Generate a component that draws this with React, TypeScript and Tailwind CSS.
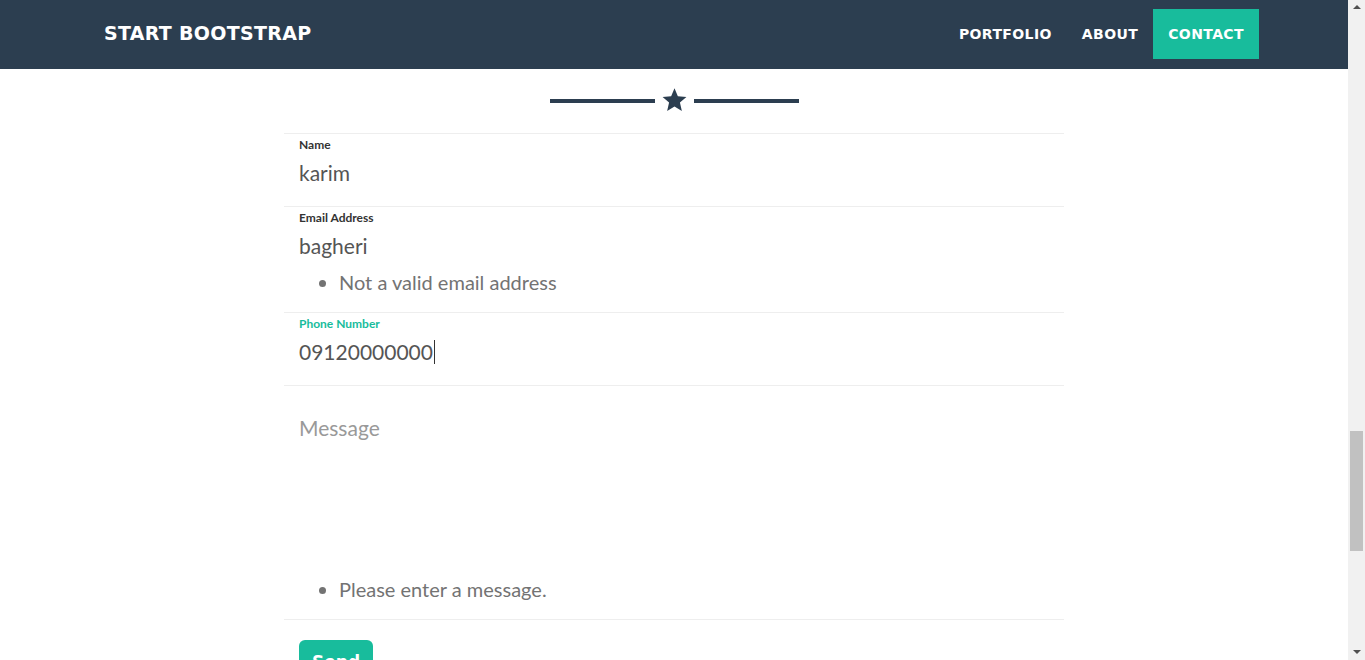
import React from 'react'

const teal = '#18bc9c'

function Star() {
  return (
    <svg viewBox="0 0 24 24" className="h-[26px] w-[27px]">
      <path
        d="M12 1.2l3.1 7.3 7.9.7-6 5.2 1.8 7.8L12 18.1l-6.8 4.1L7 14.4 1 9.2l7.9-.7z"
        fill="#2c3e50"
      />
    </svg>
  )
}

function Field({ label, value, focused, error }: { label: string; value: string; focused?: boolean; error?: string }) {
  return (
    <div className="border-b border-[#eee] px-[15px]">
      <label
        className={`block h-[21px] text-[12px] leading-[21px] font-bold ${focused ? 'text-[#18bc9c]' : 'text-[#333]'}`}
      >
        {label}
      </label>
      <div className="mt-[3px] flex h-[30px] items-center text-[21px] leading-[30px] text-[#555]">
        <span>{value}</span>
        {focused && <span className="ml-px h-[24px] w-px bg-[#333]" />}
      </div>
      {error ? (
        <ul className="mt-[8px] mb-[17px] list-disc pl-[40px] text-[20px] leading-[26px] text-[#737373]">
          <li>{error}</li>
        </ul>
      ) : (
        <div className="h-[18px]" />
      )}
    </div>
  )
}

export default function App() {
  return (
    <div className="flex h-[660px] w-[1365px] overflow-hidden bg-white" style={{ fontFamily: 'Lato, "Open Sans", sans-serif' }}>
      <div className="flex w-[1348px] flex-col">
        <nav className="flex h-[69px] shrink-0 items-center justify-between bg-[#2c3e50] pb-[2px] pl-[104px] pr-[89px]">
          <a
            href="#"
            className="text-[19px] font-bold tracking-[0.3px] text-white uppercase"
            style={{ fontFamily: '"DejaVu Sans", "Liberation Sans", sans-serif' }}
          >
            Start Bootstrap
          </a>
          <ul
            className="flex items-center text-[14px] font-bold tracking-[0.4px] text-white uppercase"
            style={{ fontFamily: '"DejaVu Sans", "Liberation Sans", sans-serif' }}
          >
            <li className="px-[15px] leading-[50px]">Portfolio</li>
            <li className="px-[15px] leading-[50px]">About</li>
            <li className="bg-[#18bc9c] px-[15px] leading-[50px]">Contact</li>
          </ul>
        </nav>

        <div className="flex h-[64px] shrink-0 items-center justify-center">
          <span className="h-[4px] w-[105px] bg-[#2c3e50]" />
          <span className="mx-[6px] flex -translate-y-[1px]">
            <Star />
          </span>
          <span className="h-[4px] w-[105px] bg-[#2c3e50]" />
        </div>

        <form className="mx-auto w-[780px]">
          <div className="border-t border-[#eee]">
            <Field label="Name" value="karim" />
            <Field label="Email Address" value="bagheri" error="Not a valid email address" />
            <Field label="Phone Number" value="09120000000" focused />
            <div className="border-b border-[#eee] px-[15px]">
              <label className="block h-[21px] text-[12px] leading-[21px] font-bold text-[#333] opacity-0">Message</label>
              <textarea
                placeholder="Message"
                readOnly
                className="mt-[6px] block h-[163px] w-full resize-none bg-transparent text-[21px] leading-[30px] text-[#555] outline-none placeholder:text-[#999]"
              />
              <ul className="mb-[17px] list-disc pl-[40px] text-[20px] leading-[26px] text-[#737373]">
                <li>Please enter a message.</li>
              </ul>
            </div>
          </div>
          <div className="px-[15px] pt-[20px]">
            <button
              type="button"
              className="rounded-[6px] bg-[#18bc9c] px-[13px] py-[10px] text-[17px] font-bold text-white"
              style={{ fontFamily: '"DejaVu Sans", "Liberation Sans", sans-serif' }}
            >
              Send
            </button>
          </div>
        </form>
      </div>

      {/* scrollbar */}
      <div className="flex w-[17px] shrink-0 flex-col items-center bg-[#f1f1f1]">
        <div className="mt-[5px] h-0 w-0 border-x-[4px] border-b-[4px] border-x-transparent border-b-[#505050]" />
        <div className="mt-[422px] h-[120px] w-[13px] bg-[#c1c1c1]" />
        <div className="mt-auto mb-[6px] h-0 w-0 border-x-[4px] border-t-[4px] border-x-transparent border-t-[#505050]" />
      </div>
    </div>
  )
}
